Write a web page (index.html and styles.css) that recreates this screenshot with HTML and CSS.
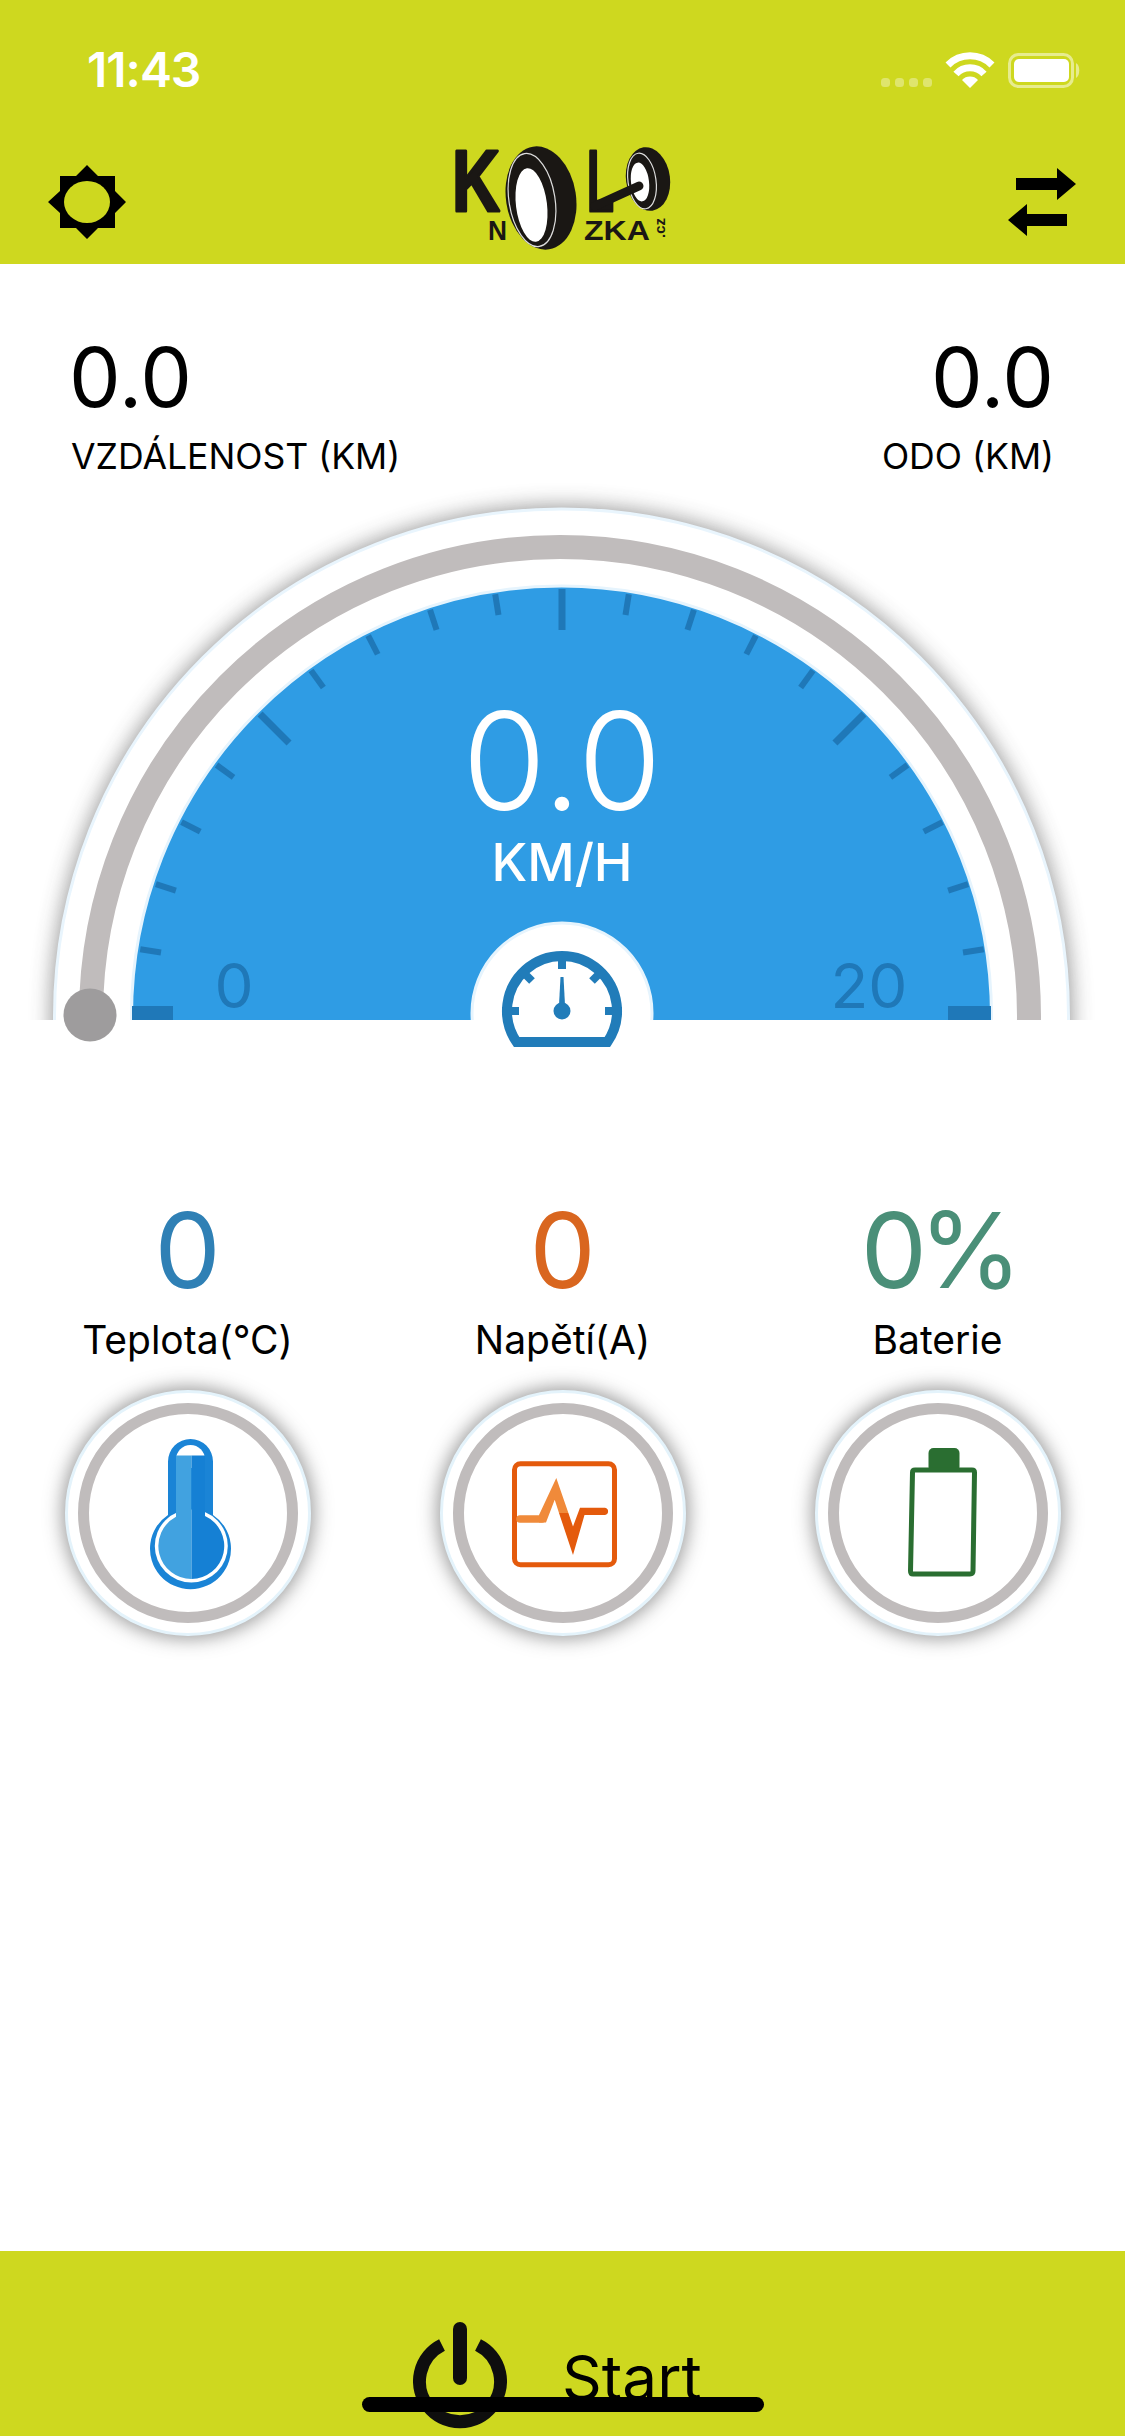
FILE: index.html
```html
<!DOCTYPE html>
<html lang="en">
<head>
    <meta charset="UTF-8">
    <meta name="viewport" content="width=device-width, initial-scale=1.0">
    <title>Kolonozka</title>
    <link rel="stylesheet" href="styles.css">
</head>
<body>
<div class="app">
    <header class="top">
        <div class="status">
            <span class="time">11:43</span>
            <svg class="status-icons" width="200" height="40" viewBox="0 0 200 40">
                <g class="signal">
                    <rect x="0" y="28" width="9" height="9" rx="3.5"/>
                    <rect x="14" y="28" width="9" height="9" rx="3.5"/>
                    <rect x="28" y="28" width="9" height="9" rx="3.5"/>
                    <rect x="42" y="28" width="9" height="9" rx="3.5"/>
                </g>
                <path class="wifi-arc" d="M67 15 A31 31 0 0 1 111 15"/>
                <path class="wifi-arc" d="M75 24 A19 19 0 0 1 103 24"/>
                <path class="wifi-dot" d="M89 38 L81 30 A11 11 0 0 1 97 30 Z"/>
                <rect class="batt-line" x="128.500" y="4.500" width="63" height="32" rx="9"/>
                <rect class="batt-fill" x="133" y="9" width="55" height="23" rx="5"/>
                <path class="batt-cap" d="M195 13 A5 8 0 0 1 195 28 Z"/>
            </svg>
        </div>
        <nav class="nav">
            <svg class="sun" width="78" height="74" viewBox="0 0 78 74">
                <path d="M39 0 L50 11 H67 V26 L78 37 L67 48 V63 H50 L39 74 L28 63 H12 V48 L0 37 L12 26 V11 H28 Z"/>
                <ellipse class="sun-hole" cx="39" cy="37" rx="23" ry="21"/>
            </svg>
            <svg class="logo" width="226" height="112" viewBox="50 20 226 112">
                <text class="logo-big" x="53" y="91" textLength="48" lengthAdjust="spacingAndGlyphs">K</text>
                <ellipse class="ink" cx="142" cy="78" rx="35" ry="52" transform="rotate(-9 142 78)"/>
                <ellipse class="logo-ring" cx="133" cy="80" rx="23" ry="47" transform="rotate(-9 133 80)"/>
                <ellipse class="paper" cx="132.500" cy="85" rx="15.500" ry="37" transform="rotate(-7 132.500 85)"/>
                <ellipse class="ink" cx="249" cy="59" rx="22" ry="32" transform="rotate(-8 249 59)"/>
                <ellipse class="logo-ring" cx="243" cy="61" rx="14" ry="28" transform="rotate(-8 243 61)"/>
                <ellipse class="paper" cx="241" cy="62" rx="9" ry="19.500" transform="rotate(-7 241 62)"/>
                <text class="logo-big" x="188" y="91" textLength="27" lengthAdjust="spacingAndGlyphs">L</text>
                <line class="logo-axle" x1="196" y1="86" x2="240" y2="66"/>
                <text class="logo-small" x="89" y="120" textLength="19" lengthAdjust="spacingAndGlyphs">N</text>
                <text class="logo-small" x="185" y="120" textLength="66" lengthAdjust="spacingAndGlyphs">ZKA</text>
                <text class="logo-cz" transform="translate(266 118) rotate(-90)">.cz</text>
            </svg>
            <svg class="swap" width="68" height="68" viewBox="0 0 68 68">
                <path d="M8 10 H49 V0 L68 16 L49 32 V22 H8 Z"/>
                <path d="M59 46 H19 V36 L0 52 L19 68 V58 H59 Z"/>
            </svg>
        </nav>
    </header>

    <section class="trip">
        <div class="trip-item">
            <div class="trip-value">0.0</div>
            <div class="trip-label">VZDÁLENOST (KM)</div>
        </div>
        <div class="trip-item trip-right">
            <div class="trip-value">0.0</div>
            <div class="trip-label">ODO (KM)</div>
        </div>
    </section>

    <svg class="gauge" width="1125" height="580" viewBox="0 480 1125 580">
        <defs>
            <clipPath id="flat"><rect x="0" y="480" width="1125" height="540"/></clipPath>
            <clipPath id="iconClip"><rect x="480" y="930" width="170" height="118"/></clipPath>
            <filter id="soft" x="-10%" y="-10%" width="120%" height="120%">
                <feGaussianBlur stdDeviation="11"/>
            </filter>
        </defs>
        <g clip-path="url(#flat)">
            <circle class="dial-shadow" cx="561.500" cy="1016" r="509" filter="url(#soft)"/>
            <circle class="dial-plate" cx="561.500" cy="1016" r="507"/>
            <circle class="dial-track" cx="560" cy="1016" r="469"/>
            <circle class="dial-face" cx="561.500" cy="1016" r="430"/>
            <rect class="dial-end" x="132" y="1006" width="41" height="14"/>
            <rect class="dial-end" x="948" y="1006" width="43" height="14"/>
            <g class="ticks">
                <line x1="562" y1="589" x2="562" y2="610" transform="rotate(-81 562 1016)"/>
                <line x1="562" y1="589" x2="562" y2="610" transform="rotate(-72 562 1016)"/>
                <line x1="562" y1="589" x2="562" y2="610" transform="rotate(-63 562 1016)"/>
                <line x1="562" y1="589" x2="562" y2="610" transform="rotate(-54 562 1016)"/>
                <line class="tick-major" x1="562" y1="589" x2="562" y2="630" transform="rotate(-45 562 1016)"/>
                <line x1="562" y1="589" x2="562" y2="610" transform="rotate(-36 562 1016)"/>
                <line x1="562" y1="589" x2="562" y2="610" transform="rotate(-27 562 1016)"/>
                <line x1="562" y1="589" x2="562" y2="610" transform="rotate(-18 562 1016)"/>
                <line x1="562" y1="589" x2="562" y2="610" transform="rotate(-9 562 1016)"/>
                <line class="tick-major" x1="562" y1="589" x2="562" y2="630"/>
                <line x1="562" y1="589" x2="562" y2="610" transform="rotate(9 562 1016)"/>
                <line x1="562" y1="589" x2="562" y2="610" transform="rotate(18 562 1016)"/>
                <line x1="562" y1="589" x2="562" y2="610" transform="rotate(27 562 1016)"/>
                <line x1="562" y1="589" x2="562" y2="610" transform="rotate(36 562 1016)"/>
                <line class="tick-major" x1="562" y1="589" x2="562" y2="630" transform="rotate(45 562 1016)"/>
                <line x1="562" y1="589" x2="562" y2="610" transform="rotate(54 562 1016)"/>
                <line x1="562" y1="589" x2="562" y2="610" transform="rotate(63 562 1016)"/>
                <line x1="562" y1="589" x2="562" y2="610" transform="rotate(72 562 1016)"/>
                <line x1="562" y1="589" x2="562" y2="610" transform="rotate(81 562 1016)"/>
            </g>
            <circle class="hub-plate" cx="562" cy="1013" r="90"/>
        </g>
        <text class="dial-scale" x="234" y="1008">0</text>
        <text class="dial-scale" x="869" y="1008">20</text>
        <text class="dial-speed" x="562" y="810">0.0</text>
        <text class="dial-unit" x="562" y="881">KM/H</text>
        <g class="meter" clip-path="url(#iconClip)">
            <path class="meter-rim" d="M516.600 1042 A55 55 0 1 1 607.400 1042 Z"/>
            <line x1="562" y1="952" x2="562" y2="969"/>
            <line x1="502" y1="1011" x2="519" y2="1011"/>
            <line x1="605" y1="1011" x2="622" y2="1011"/>
            <line x1="520" y1="969" x2="532" y2="981"/>
            <line x1="604" y1="969" x2="592" y2="981"/>
        </g>
        <path class="meter-needle" d="M560.500 977 H563.500 L565 1005 H559 Z"/>
        <circle class="meter-hub" cx="562" cy="1011" r="8.500"/>
        <circle class="dial-knob" cx="90" cy="1015" r="26.500"/>
    </svg>

    <section class="metrics">
        <div class="metric">
            <div class="metric-value metric-temp">0</div>
            <div class="metric-label">Teplota(°C)</div>
            <div class="disc">
                <svg width="160" height="170" viewBox="0 0 160 170">
                    <path class="thermo-line" d="M60 33.500 A22.500 22.500 0 0 1 105 33.500 V87 A40.500 40.500 0 1 1 60 87 Z"/>
                    <path class="thermo-gap" d="M68 31.500 A14.500 14.500 0 0 1 97 31.500 V40 H68 Z"/>
                    <circle class="thermo-gap" cx="83.300" cy="118" r="36.500"/>
                    <path class="thermo-light" d="M68 27.500 H83.500 V151 A33 33 0 0 1 68 88.800 Z"/>
                    <path class="thermo-dark" d="M83.500 27.500 H97 V88 A33 33 0 0 1 83.500 151 Z"/>
                </svg>
            </div>
        </div>
        <div class="metric">
            <div class="metric-value metric-volt">0</div>
            <div class="metric-label">Napětí(A)</div>
            <div class="disc">
                <svg width="160" height="170" viewBox="0 0 160 170">
                    <rect class="volt-box" x="31.500" y="35.800" width="100" height="101" rx="6"/>
                    <path class="volt-line" d="M37 91 H59"/>
                    <path class="volt-light" d="M56 87 L73.300 50 L85.400 85 H76 L71.700 71.700 L63 94.500 H56 Z"/>
                    <path class="volt-spike" d="M76 85 H85.400 L90 98.500 L97 79.700 H122 A3.700 3.700 0 0 1 122 87 H101.500 L90 127 Z"/>
                </svg>
            </div>
        </div>
        <div class="metric">
            <div class="metric-value metric-batt">0%</div>
            <div class="metric-label">Baterie</div>
            <div class="disc">
                <svg width="160" height="170" viewBox="0 0 160 170">
                    <rect class="batt-cell" x="70.500" y="20" width="31" height="24" rx="5"/>
                    <path class="batt-body" d="M57 42 H114 Q116.500 42 116.500 44.500 L115 143 Q115 146 112 146 H55 Q52.500 146 52.500 143 L54.500 44.500 Q54.500 42 57 42 Z"/>
                </svg>
            </div>
        </div>
    </section>

    <footer class="bottom">
        <button class="start">
            <svg class="power" width="94" height="114" viewBox="0 0 94 114">
                <path class="power-ring" d="M29 23 A40.500 40.500 0 1 0 65 23"/>
                <line class="power-bar" x1="47" y1="7" x2="47" y2="56"/>
            </svg>
            <span>Start</span>
        </button>
        <div class="home-bar"></div>
    </footer>
</div>
</body>
</html>
```

FILE: styles.css
```css
body {
    margin: 0;
    background: #fff;
    font-family: Inter, "Noto Sans", sans-serif;
    color: #000;
}

.app {
    width: 1125px;
    height: 2436px;
    display: flex;
    flex-direction: column;
    overflow: hidden;
}

/* top bar */
.top {
    height: 264px;
    background: #ced81f;
}

.status {
    height: 132px;
    box-sizing: border-box;
    padding: 48px 44px 0 87px;
    display: flex;
    justify-content: space-between;
}

.time {
    font-size: 48px;
    line-height: 44px;
    font-weight: 600;
    color: #fff;
    letter-spacing: -1px;
}

.status-icons {
    margin-top: 2px;
}

.signal rect {
    fill: rgba(255, 255, 255, .35);
}

.wifi-arc {
    fill: none;
    stroke: #fff;
    stroke-width: 7;
}

.wifi-dot {
    fill: #fff;
}

.batt-line {
    fill: none;
    stroke: rgba(255, 255, 255, .5);
    stroke-width: 3;
}

.batt-fill {
    fill: #fff;
}

.batt-cap {
    fill: rgba(255, 255, 255, .5);
}

.nav {
    height: 132px;
    box-sizing: border-box;
    padding: 8px 49px 0 48px;
    display: grid;
    grid-template-columns: 1fr auto 1fr;
    align-items: center;
}

.swap {
    justify-self: end;
}

.logo {
    margin-top: -12px;
}

.sun-hole {
    fill: #ced81f;
}

.ink {
    fill: #1a1714;
}

.paper {
    fill: #fff;
}

.logo-ring {
    fill: none;
    stroke: #ddd;
    stroke-width: 1.200;
}

.logo-big {
    font-family: "Liberation Sans", sans-serif;
    font-size: 88px;
    font-weight: 700;
    fill: #1a1714;
    stroke: #1a1714;
    stroke-width: 3;
    stroke-linejoin: round;
}

.logo-axle {
    stroke: #1a1714;
    stroke-width: 9;
    stroke-linecap: round;
}

.logo-small {
    font-family: "Liberation Sans", sans-serif;
    font-size: 28px;
    font-weight: 700;
    fill: #1a1714;
}

.logo-cz {
    font-family: "Liberation Sans", sans-serif;
    font-size: 15px;
    font-weight: 700;
    fill: #1a1714;
}

/* distance and odometer */
.trip {
    height: 216px;
    box-sizing: border-box;
    padding: 72px 71px 0 71px;
    display: flex;
    justify-content: space-between;
}

.trip-right {
    text-align: right;
}

.trip-value {
    font-size: 82px;
    line-height: 84px;
    margin-left: -2px;
}

.trip-label {
    font-size: 35.600px;
    line-height: 40px;
    margin-top: 17px;
}

/* gauge */
.gauge {
    display: block;
    flex: none;
}

.dial-shadow {
    fill: #444;
    opacity: .6;
}

.dial-plate {
    fill: #fff;
    stroke: #e9f5fd;
    stroke-width: 3;
}

.dial-track {
    fill: none;
    stroke: #c0bcbc;
    stroke-width: 24;
}

.dial-face {
    fill: #2f9ce4;
    stroke: #e6f4fd;
    stroke-width: 3;
}

.dial-end {
    fill: #1f78b8;
}

.ticks line {
    stroke: #1f78b8;
    stroke-width: 6;
}

.ticks .tick-major {
    stroke-width: 7;
}

.hub-plate {
    fill: #fff;
    stroke: #e6f4fd;
    stroke-width: 3;
}

.dial-scale {
    font-size: 62px;
    fill: #1f78b8;
    text-anchor: middle;
}

.dial-speed {
    font-size: 136px;
    font-weight: 300;
    fill: #fff;
    text-anchor: middle;
}

.dial-unit {
    font-size: 52px;
    font-weight: 500;
    fill: #fff;
    text-anchor: middle;
}

.meter line {
    stroke: #217cb9;
    stroke-width: 8;
}

.meter-rim {
    fill: none;
    stroke: #217cb9;
    stroke-width: 10;
}

.meter-needle,
.meter-hub {
    fill: #217cb9;
}

.dial-knob {
    fill: #9e9c9d;
}

/* temperature, voltage, battery */
.metrics {
    margin-top: 140px;
    display: grid;
    grid-template-columns: repeat(3, 1fr);
}

.metric {
    display: flex;
    flex-direction: column;
    align-items: center;
}

.metric-value {
    font-size: 105px;
    line-height: 100px;
}

.metric-batt {
    color: #4a8f78;
    letter-spacing: -8px;
}

.metric-temp {
    color: #2f80b5;
}

.metric-volt {
    color: #d9661f;
}

.metric-label {
    font-size: 39px;
    line-height: 44px;
    margin-top: 18px;
}

.disc {
    width: 240px;
    height: 240px;
    margin-top: 28px;
    border: 3px solid #e4f3fb;
    border-radius: 50%;
    background: #fff;
    box-shadow: 0 0 18px 3px rgba(60, 60, 60, .5);
    display: flex;
    align-items: center;
    justify-content: center;
    position: relative;
}

.disc::before {
    content: "";
    position: absolute;
    inset: 10px;
    border: 11px solid #c0bcbc;
    border-radius: 50%;
}

.disc svg {
    position: relative;
}

.thermo-line {
    fill: #1a84d6;
}

.thermo-gap {
    fill: #fff;
}

.thermo-light {
    fill: #41a2e0;
}

.thermo-dark {
    fill: #1580d4;
}

.volt-box {
    fill: none;
    stroke: #e45a0c;
    stroke-width: 5;
}

.volt-line {
    fill: none;
    stroke: #f08a3a;
    stroke-width: 7.500;
    stroke-linecap: round;
}

.volt-light {
    fill: #f08a3a;
}

.volt-spike {
    fill: #e45a0c;
}

.batt-cell {
    fill: #2a6e31;
}

.batt-body {
    fill: none;
    stroke: #2a6e31;
    stroke-width: 5;
}

/* bottom bar */
.bottom {
    margin-top: auto;
    height: 185px;
    background: #ced81f;
    position: relative;
}

.start {
    border: none;
    background: none;
    padding: 0 0 0 413px;
    font-family: inherit;
    color: #000;
    width: 100%;
    height: 185px;
    display: flex;
    align-items: flex-start;
    box-sizing: border-box;
}

.start span {
    font-size: 62px;
    line-height: 70px;
    margin: 92px 0 0 55px;
}

.power {
    margin-top: 71px;
    flex: none;
}

.power-ring {
    fill: none;
    stroke: #0e0e0e;
    stroke-width: 13;
}

.power-bar {
    stroke: #0e0e0e;
    stroke-width: 14;
    stroke-linecap: round;
}

.home-bar {
    position: absolute;
    left: 362px;
    top: 146px;
    width: 402px;
    height: 15px;
    border-radius: 8px;
    background: #000;
}
```
